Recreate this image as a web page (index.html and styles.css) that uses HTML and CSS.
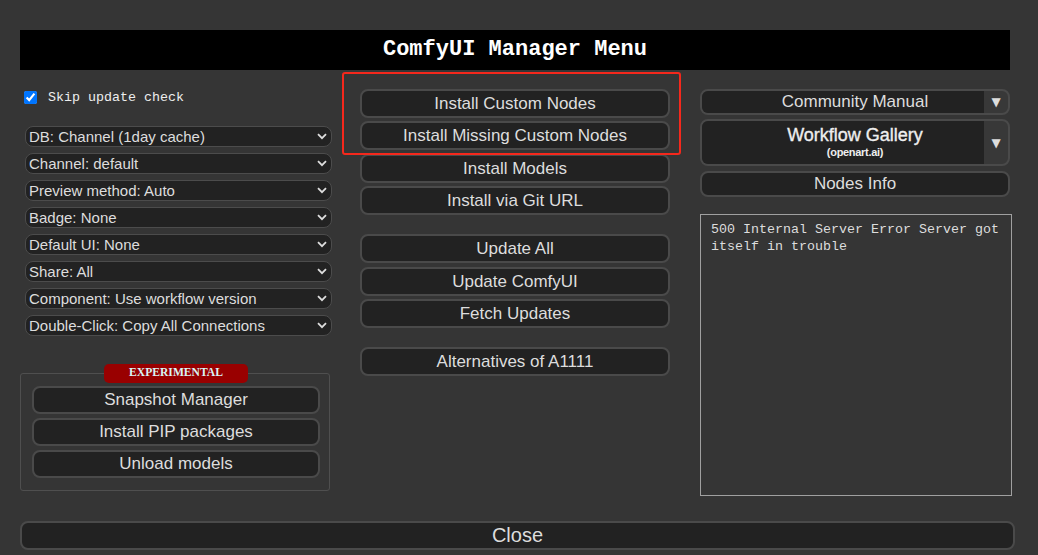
FILE: index.html
```html
<!DOCTYPE html>
<html lang="en">
<head>
<meta charset="utf-8">
<title>ComfyUI Manager Menu</title>
<link rel="stylesheet" href="styles.css">
</head>
<body>
<div class="dialog">
  <h1 class="title">ComfyUI Manager Menu</h1>
  <div class="columns">
    <div class="col col-left">
      <label class="skip-row"><input type="checkbox" checked class="skip-box"><span>Skip update check</span></label>
      <div class="selects">
        <select class="opt"><option>DB: Channel (1day cache)</option></select>
        <select class="opt"><option>Channel: default</option></select>
        <select class="opt"><option>Preview method: Auto</option></select>
        <select class="opt"><option>Badge: None</option></select>
        <select class="opt"><option>Default UI: None</option></select>
        <select class="opt"><option>Share: All</option></select>
        <select class="opt"><option>Component: Use workflow version</option></select>
        <select class="opt"><option>Double-Click: Copy All Connections</option></select>
      </div>
      <fieldset class="experimental">
        <legend class="exp-badge">EXPERIMENTAL</legend>
        <button class="btn btn-sm">Snapshot Manager</button>
        <button class="btn btn-sm">Install PIP packages</button>
        <button class="btn btn-sm">Unload models</button>
      </fieldset>
    </div>

    <div class="col col-mid">
      <div class="group">
        <button class="btn">Install Custom Nodes</button>
        <button class="btn">Install Missing Custom Nodes</button>
        <button class="btn">Install Models</button>
        <button class="btn">Install via Git URL</button>
      </div>
      <div class="group">
        <button class="btn">Update All</button>
        <button class="btn">Update ComfyUI</button>
        <button class="btn">Fetch Updates</button>
      </div>
      <div class="group">
        <button class="btn">Alternatives of A1111</button>
      </div>
      <div class="highlight"></div>
    </div>

    <div class="col col-right">
      <div class="split split-short">
        <button class="split-main">Community Manual</button>
        <span class="split-arrow">▼</span>
      </div>
      <div class="split split-tall">
        <button class="split-main gallery">
          <span class="gallery-title">Workflow Gallery</span>
          <span class="gallery-sub">(openart.ai)</span>
        </button>
        <span class="split-arrow">▼</span>
      </div>
      <button class="btn btn-info">Nodes Info</button>
      <textarea class="log" readonly>500 Internal Server Error Server got itself in trouble</textarea>
    </div>
  </div>
  <button class="btn btn-close">Close</button>
</div>
</body>
</html>
```

FILE: styles.css
```css
* { box-sizing: border-box; }

html, body {
  margin: 0;
  padding: 0;
  background: #353535;
  height: 555px;
  overflow: hidden;
}

.dialog {
  padding: 30px 0 0 20px;
  width: 1038px;
  font-family: "Liberation Sans", Arial, sans-serif;
  color: #dddddd;
}

.title {
  margin: 0;
  width: 990px;
  height: 40px;
  background: #000;
  color: #ffffff;
  font-family: "Liberation Mono", "DejaVu Sans Mono", monospace;
  font-weight: bold;
  font-size: 22px;
  line-height: 40px;
  text-align: center;
}

.columns {
  display: grid;
  grid-template-columns: 310px 310px 310px;
  column-gap: 30px;
  width: 990px;
  height: 426px;
  padding-top: 19px;
}

.col {
  display: flex;
  flex-direction: column;
  min-width: 0;
}

.col-mid { position: relative; }

/* left column */
.skip-row {
  display: flex;
  align-items: center;
  height: 16px;
  font-family: "Liberation Mono", "DejaVu Sans Mono", monospace;
  font-size: 13.33px;
  color: #eeeeee;
  padding-left: 4px;
}

.skip-box {
  width: 13px;
  height: 13px;
  margin: 0 11px 0 0;
  accent-color: #0075ff;
}

.selects {
  display: flex;
  flex-direction: column;
  align-items: flex-start;
  gap: 6px;
  margin-top: 21px;
}

.opt {
  -webkit-appearance: none;
  appearance: none;
  flex: none;
  margin: 0 0 0 5px;
  width: 307px;
  min-width: 307px;
  height: 21px;
  padding: 0 20px 0 3px;
  background-color: #222222;
  background-image: url("data:image/svg+xml;utf8,<svg xmlns='http://www.w3.org/2000/svg' width='10' height='7' viewBox='0 0 10 7'><path d='M1 1.2 L5 5.2 L9 1.2' fill='none' stroke='%23dddddd' stroke-width='1.8'/></svg>");
  background-repeat: no-repeat;
  background-position: right 4px center;
  border: 1px solid #4c4c4c;
  border-radius: 8px;
  color: #dddddd;
  font-family: "Liberation Sans", Arial, sans-serif;
  font-size: 15px;
  line-height: 19px;
  outline: none;
}

.experimental {
  margin: 28px 0 0 0;
  padding: 0 9px 12px 11px;
  border: 1px solid #4f4f4f;
  border-radius: 3px;
  display: flex;
  flex-direction: column;
  gap: 4px;
  min-width: 0;
}

.exp-badge {
  margin: 0 auto 3px auto;
  width: 144px;
  height: 19px;
  padding: 0;
  background: #990000;
  border-radius: 5px;
  color: #d8f6f6;
  font-family: "Liberation Serif", "Times New Roman", serif;
  font-weight: bold;
  font-size: 11.6px;
  line-height: 17px;
  text-align: center;
}

/* buttons */
.btn {
  display: block;
  width: 100%;
  height: 29px;
  padding: 0;
  background: #222222;
  border: 2px solid #4a4a4a;
  border-radius: 8px;
  color: #dddddd;
  font-family: "Liberation Sans", Arial, sans-serif;
  font-size: 17px;
  line-height: 25px;
  text-align: center;
  cursor: pointer;
}

.btn-sm {
  height: 28px;
  line-height: 24px;
}

.group {
  display: flex;
  flex-direction: column;
  gap: 3.3px;
}

.group + .group { margin-top: 19.5px; }

.highlight {
  position: absolute;
  left: -18px;
  top: -17px;
  width: 339px;
  height: 83px;
  border: 2.5px solid #f5281c;
  border-radius: 3px;
  pointer-events: none;
}

/* right column */
.split {
  display: flex;
  width: 310px;
  border: 2px solid #4a4a4a;
  border-radius: 8px;
  overflow: hidden;
  background: #383838;
}

.split-short { height: 26px; }
.split-tall { height: 47px; margin-top: 4px; }

.split-main {
  flex: 1;
  padding: 0 0 0 24px;
  border: 0;
  background: #222222;
  color: #dddddd;
  font-family: "Liberation Sans", Arial, sans-serif;
  font-size: 17px;
  line-height: 22px;
  text-align: center;
}

.split-arrow {
  width: 24px;
  display: flex;
  align-items: center;
  justify-content: center;
  color: #dddddd;
  font-size: 12px;
  font-family: "DejaVu Sans", sans-serif;
}

.gallery {
  display: flex;
  flex-direction: column;
  align-items: center;
  justify-content: center;
}

.gallery-title {
  font-size: 18px;
  line-height: 20px;
  -webkit-text-stroke: 0.35px #eeeeee;
  color: #eeeeee;
}

.gallery-sub {
  font-size: 11px;
  font-weight: bold;
  line-height: 15px;
  letter-spacing: -0.3px;
  color: #eeeeee;
}

.btn-info {
  height: 26px;
  margin-top: 5px;
  line-height: 22px;
}

.log {
  margin-top: 17px;
  width: 312px;
  height: 282px;
  padding: 6px 8px 6px 10px;
  background: #353535;
  border: 1px solid #a0a0a0;
  border-radius: 0;
  color: #dddddd;
  font-family: "Liberation Mono", "DejaVu Sans Mono", monospace;
  font-size: 13.33px;
  line-height: 17px;
  resize: none;
  outline: none;
}

.btn-close {
  margin-top: 25px;
  width: 995px;
  height: 29px;
  font-size: 20px;
  line-height: 25px;
}
```
